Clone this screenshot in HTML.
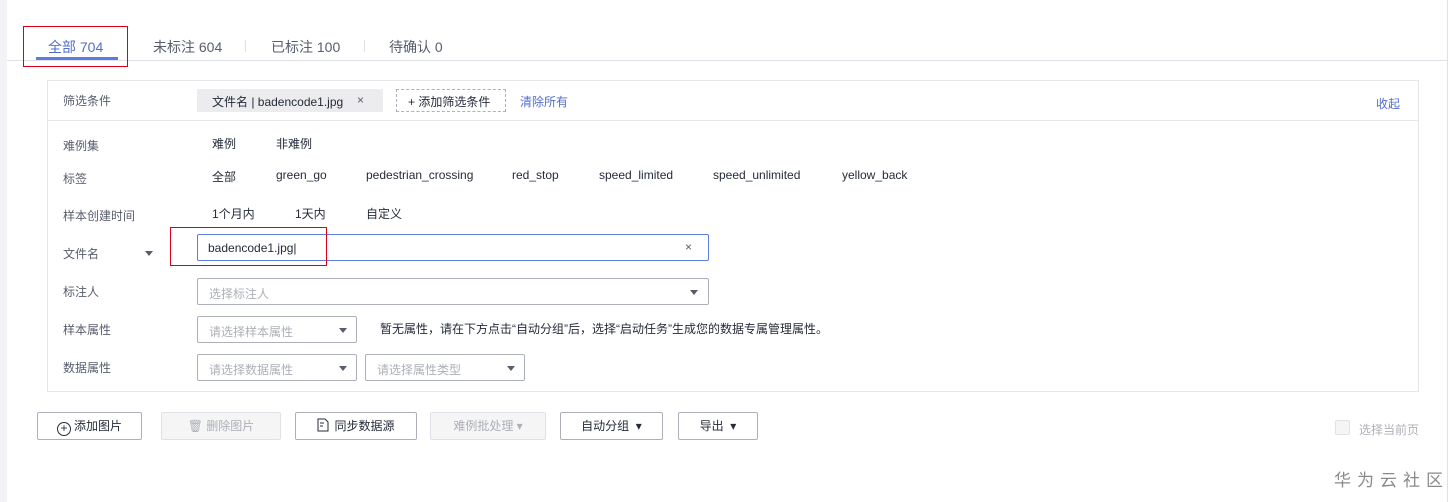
<!DOCTYPE html>
<html><head><meta charset="utf-8"><style>
*{box-sizing:border-box;margin:0;padding:0}
body{width:1455px;height:502px;background:#fff;font-family:"Liberation Sans","Noto Sans CJK SC",sans-serif;font-size:12px;color:#252b3a;position:relative;overflow:hidden}
.a{position:absolute;white-space:nowrap}
.lbl{color:#575d6c}
.inp{position:absolute;border:1px solid #adb0b8;background:#fff;border-radius:2px;height:27px}
.ph{color:#adb0b8;position:absolute;left:11px;top:6px}
.tri{position:absolute;width:0;height:0;border-left:4px solid transparent;border-right:4px solid transparent;border-top:5px solid #575d6c}
.btn{position:absolute;top:412px;height:28px;border:1px solid #adb0b8;border-radius:2px;background:#fff;text-align:center;line-height:26px;color:#252b3a}
.dis{background:#f5f5f6;border-color:#dfe1e6;color:#adb0b8}
</style></head><body>
<div class="a" style="left:0;top:0;width:7px;height:502px;background:#f3f3f5"></div>
<div class="a" style="left:1447px;top:0;width:1px;height:502px;background:#dfe1e6"></div>
<!-- tabs -->
<div class="a" style="left:7px;top:60px;width:1440px;height:1px;background:#dfe1e6"></div>
<div class="a" style="left:48px;top:37px;font-size:14px;color:#526ecc">全部 704</div>
<div class="a" style="left:36px;top:57px;width:82px;height:3px;background:#5e7ce0"></div>
<div class="a" style="left:153px;top:37px;font-size:14px;color:#575d6c">未标注 604</div>
<div class="a" style="left:245px;top:40px;width:1px;height:12px;background:#dfe1e6"></div>
<div class="a" style="left:271px;top:37px;font-size:14px;color:#575d6c">已标注 100</div>
<div class="a" style="left:364px;top:40px;width:1px;height:12px;background:#dfe1e6"></div>
<div class="a" style="left:389px;top:37px;font-size:14px;color:#575d6c">待确认 0</div>
<div class="a" style="left:23px;top:26px;width:105px;height:41px;border:1px solid #d9001b"></div>
<!-- panel -->
<div class="a" style="left:47px;top:80px;width:1372px;height:312px;border:1px solid #e5e6ea"></div>
<div class="a" style="left:48px;top:120px;width:1370px;height:1px;background:#e5e6ea"></div>
<div class="a lbl" style="left:63px;top:92px">筛选条件</div>
<div class="a" style="left:197px;top:89px;width:186px;height:23px;background:#ececee"></div>
<div class="a" style="left:212px;top:93px">文件名 | badencode1.jpg</div>
<div class="a" style="left:357px;top:93px;color:#575d6c">×</div>
<div class="a" style="left:396px;top:89px;width:110px;height:23px;border:1px dashed #adb0b8"></div>
<div class="a" style="left:408px;top:93px">+ 添加筛选条件</div>
<div class="a" style="left:520px;top:93px;color:#526ecc">清除所有</div>
<div class="a" style="left:1376px;top:95px;color:#526ecc">收起</div>
<div class="a lbl" style="left:63px;top:137px">难例集</div>
<div class="a" style="left:212px;top:135px">难例</div><div class="a" style="left:276px;top:135px">非难例</div>
<div class="a lbl" style="left:63px;top:170px">标签</div>
<div class="a" style="left:212px;top:168px">全部</div>
<div class="a" style="left:276px;top:168px">green_go</div>
<div class="a" style="left:366px;top:168px">pedestrian_crossing</div>
<div class="a" style="left:512px;top:168px">red_stop</div>
<div class="a" style="left:599px;top:168px">speed_limited</div>
<div class="a" style="left:713px;top:168px">speed_unlimited</div>
<div class="a" style="left:842px;top:168px">yellow_back</div>
<div class="a lbl" style="left:63px;top:207px">样本创建时间</div>
<div class="a" style="left:212px;top:205px">1个月内</div><div class="a" style="left:295px;top:205px">1天内</div><div class="a" style="left:366px;top:205px">自定义</div>
<div class="a lbl" style="left:63px;top:245px">文件名</div>
<div class="tri" style="left:145px;top:251px"></div>
<div class="inp" style="left:197px;top:234px;width:512px;border-color:#5e7ce0"><div class="a" style="left:10px;top:6px">badencode1.jpg|</div><div class="a" style="left:487px;top:5px;color:#575d6c">×</div></div>
<div class="a" style="left:170px;top:227px;width:157px;height:39px;border:1px solid #d9001b"></div>
<div class="a lbl" style="left:63px;top:283px">标注人</div>
<div class="inp" style="left:197px;top:278px;width:512px"><div class="ph">选择标注人</div><div class="tri" style="left:492px;top:11px"></div></div>
<div class="a lbl" style="left:63px;top:321px">样本属性</div>
<div class="inp" style="left:197px;top:316px;width:160px"><div class="ph">请选择样本属性</div><div class="tri" style="left:141px;top:11px"></div></div>
<div class="a" style="left:380px;top:320px">暂无属性，请在下方点击“自动分组”后，选择“启动任务”生成您的数据专属管理属性。</div>
<div class="a lbl" style="left:63px;top:359px">数据属性</div>
<div class="inp" style="left:197px;top:354px;width:160px"><div class="ph">请选择数据属性</div><div class="tri" style="left:141px;top:11px"></div></div>
<div class="inp" style="left:365px;top:354px;width:160px"><div class="ph">请选择属性类型</div><div class="tri" style="left:141px;top:11px"></div></div>
<!-- buttons -->
<div class="btn" style="left:37px;width:105px"><span style="display:inline-block;width:14px;height:14px;border:1px solid #252b3a;border-radius:50%;line-height:11px;font-size:12px;vertical-align:-2px;margin-right:3px">+</span>添加图片</div>
<div class="btn dis" style="left:161px;width:120px">🗑 删除图片</div>
<div class="btn" style="left:295px;width:122px"><svg width="12" height="14" style="vertical-align:-2px;margin-right:5px"><path d="M1 1h7l3 3v9H1z" fill="none" stroke="#252b3a"/><path d="M3 5h4M3 8h3" stroke="#252b3a"/></svg>同步数据源</div>
<div class="btn dis" style="left:430px;width:116px">难例批处理 ▾</div>
<div class="btn" style="left:560px;width:103px">自动分组 &nbsp;▾</div>
<div class="btn" style="left:678px;width:80px">导出 &nbsp;▾</div>
<div class="a" style="left:1335px;top:420px;width:15px;height:15px;border:1px solid #dfe1e6;background:#f5f5f6;border-radius:2px"></div>
<div class="a" style="left:1359px;top:421px;color:#adb0b8">选择当前页</div>
<div class="a" style="left:1334px;top:466px;font-size:17px;color:#8a8a8a;letter-spacing:6px">华为云社区</div>
</body></html>
